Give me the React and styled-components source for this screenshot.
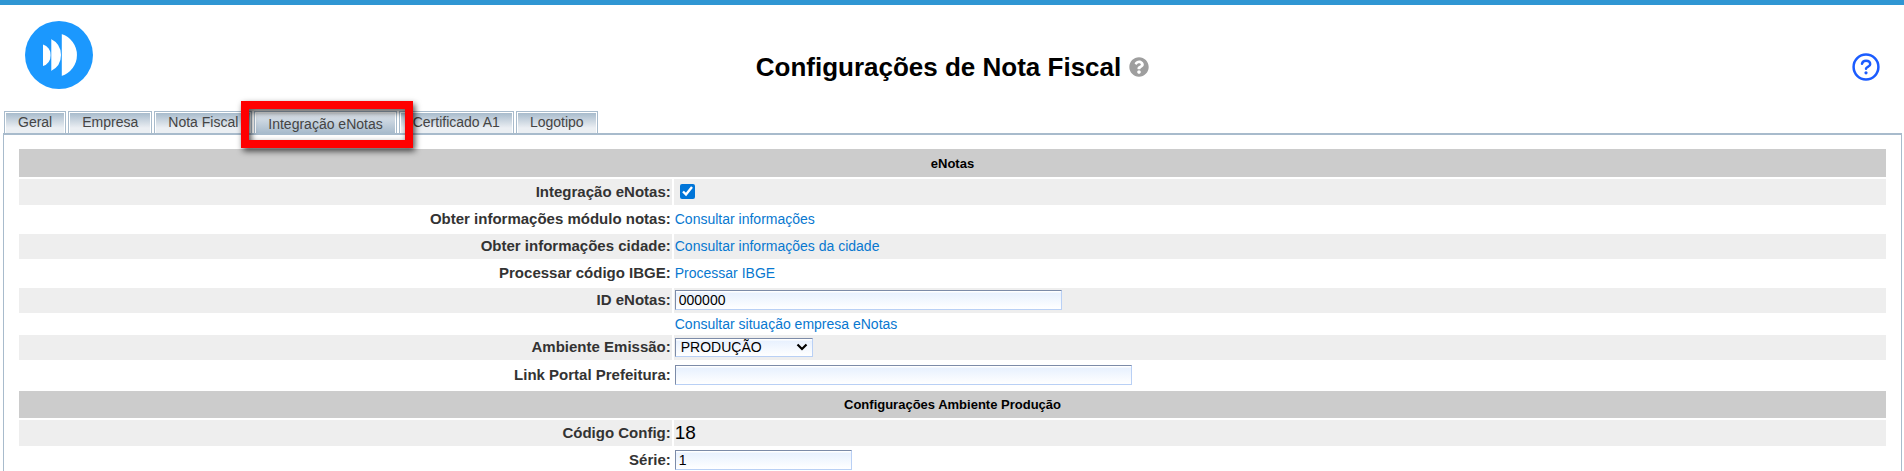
import styled, { createGlobalStyle } from "styled-components"

const tabs = [
  { title: "Geral" },
  { title: "Empresa" },
  { title: "Nota Fiscal" },
  { title: "Integração eNotas", active: true },
  { title: "Certificado A1" },
  { title: "Logotipo" },
]

const App = () => {
  return (
    <>
      <GlobalStyle />
      <Header>
        <Logo viewBox="0 0 68 68" role="img" aria-label="Logo">
          <circle cx="34" cy="34" r="34" fill="#1b98fe" />
          <path
            fill="#fff"
            d="M18 23.5A11.300 11.300 0 0 1 18 45ZM26 18A17.800 17.800 0 0 1 26 50ZM36.500 13A22 22 0 0 1 36.500 55Z"
          />
          <path
            fill="none"
            stroke="#1b98fe"
            strokeWidth="0.6"
            d="M26 18V50M36.500 13V55"
          />
        </Logo>
        <Title>
          <h1>Configurações de Nota Fiscal</h1>
          <TitleHelp type="button" aria-label="Ajuda">
            <svg viewBox="0 0 512 512" width="20" height="20">
              <path
                fill="#9e9e9e"
                d="M504 256c0 137-111 248-248 248S8 393 8 256 119 8 256 8s248 111 248 248zM262.700 90c-54.500 0-89.300 23-116.500 63.800-3.500 5.300-2.400 12.400 2.700 16.300l34.700 26.300c5.200 3.900 12.600 3 16.700-2.100 17.900-22.700 30.100-35.800 57.300-35.800 20.400 0 45.700 13.100 45.700 33 0 15-12.400 22.700-32.500 34C247.100 238.500 216 254.900 216 296v4c0 6.600 5.400 12 12 12h56c6.600 0 12-5.400 12-12v-1.300c0-28.500 83.200-29.600 83.200-106.700 0-58-60.200-102-116.500-102zM256 338c-25.400 0-46 20.600-46 46s20.600 46 46 46 46-20.600 46-46-20.600-46-46-46z"
              />
            </svg>
          </TitleHelp>
        </Title>
        <HelpLink href="#ajuda" aria-label="Central de ajuda">
          <svg
            viewBox="0 0 28 28"
            width="28"
            height="28"
            fill="none"
            stroke="#1b5cff"
            strokeWidth="2.5"
            strokeLinecap="round"
          >
            <circle cx="14" cy="14" r="12.400" />
            <path d="M10 10.800C10.400 8.800 12 7.800 14 7.800C16.400 7.800 18.200 9.200 18.200 11.300C18.200 14 14 13.800 14 15.800" />
            <circle cx="14" cy="19.800" r="1.600" fill="#1b5cff" stroke="none" />
          </svg>
        </HelpLink>
      </Header>

      <Tabs>
        {tabs.map((tab) => (
          <Tab key={tab.title} $active={tab.active}>
            <TabButton type="button" $active={tab.active}>
              {tab.title}
            </TabButton>
            {tab.active && <Highlight />}
          </Tab>
        ))}
      </Tabs>

      <Panel>
        <Table>
          <colgroup>
            <col width="35%" />
            <col />
          </colgroup>
          <tbody>
            <tr>
              <Section colSpan={2} $height={28}>
                eNotas
              </Section>
            </tr>
            <Row $shaded $height={26}>
              <th scope="row">
                <label htmlFor="integracao">Integração eNotas:</label>
              </th>
              <td>
                <Checkbox id="integracao" type="checkbox" defaultChecked />
              </td>
            </Row>
            <Row>
              <th scope="row">Obter informações módulo notas:</th>
              <td>
                <a href="#informacoes">Consultar informações</a>
              </td>
            </Row>
            <Row $shaded>
              <th scope="row">Obter informações cidade:</th>
              <td>
                <a href="#cidade">Consultar informações da cidade</a>
              </td>
            </Row>
            <Row>
              <th scope="row">Processar código IBGE:</th>
              <td>
                <a href="#ibge">Processar IBGE</a>
              </td>
            </Row>
            <Row $shaded>
              <th scope="row">
                <label htmlFor="id-enotas">ID eNotas:</label>
              </th>
              <td>
                <Input id="id-enotas" $width={387} defaultValue="000000" />
              </td>
            </Row>
            <Row $height={18}>
              <th />
              <td>
                <a href="#situacao">Consultar situação empresa eNotas</a>
              </td>
            </Row>
            <Row $shaded>
              <th scope="row">
                <label htmlFor="ambiente">Ambiente Emissão:</label>
              </th>
              <td>
                <SelectBox>
                  <select id="ambiente" defaultValue="producao">
                    <option value="producao">PRODUÇÃO</option>
                    <option value="homologacao">HOMOLOGAÇÃO</option>
                  </select>
                  <svg viewBox="0 0 12 8" width="12" height="8">
                    <path
                      d="M1.500 1.500L6 6L10.500 1.500"
                      fill="none"
                      stroke="#000"
                      strokeWidth="2.2"
                    />
                  </svg>
                </SelectBox>
              </td>
            </Row>
            <Row $height={27}>
              <th scope="row">
                <label htmlFor="link-portal">Link Portal Prefeitura:</label>
              </th>
              <td>
                <Input id="link-portal" $width={457} />
              </td>
            </Row>
            <tr>
              <Section colSpan={2} $height={27}>
                Configurações Ambiente Produção
              </Section>
            </tr>
            <Row $shaded $height={26}>
              <th scope="row">Código Config:</th>
              <td>
                <Code>18</Code>
              </td>
            </Row>
            <Row>
              <th scope="row">
                <label htmlFor="serie">Série:</label>
              </th>
              <td>
                <Input id="serie" $width={177} defaultValue="1" />
              </td>
            </Row>
          </tbody>
        </Table>
      </Panel>
    </>
  )
}

const GlobalStyle = createGlobalStyle`
  * {
    box-sizing: border-box;
  }
  html {
    overflow: hidden;
  }
  body {
    margin: 0;
    border-top: 5px solid #2f96d3;
    background: #fff;
    color: #000;
    font-family: Arial, "Liberation Sans", sans-serif;
    font-size: 14px;
  }
`

const Header = styled.header`
  display: grid;
  grid-template-columns: 1fr auto 1fr;
  align-items: center;
  padding: 16px 24px 22px 25px;
`

const Logo = styled.svg`
  width: 68px;
  height: 68px;
`

const Title = styled.div`
  display: flex;
  align-items: center;
  gap: 8px;
  padding-top: 24px;
  h1 {
    margin: 0;
    font-size: 26px;
    line-height: 30px;
  }
`

const TitleHelp = styled.button`
  display: flex;
  padding: 0;
  border: 0;
  background: none;
  cursor: pointer;
`

const HelpLink = styled.a`
  display: flex;
  justify-self: end;
  padding-top: 24px;
`

const Tabs = styled.nav`
  display: flex;
  gap: 2px;
  padding-left: 4px;
`

const Tab = styled.div`
  position: relative;
  height: 22px;
  padding: 1px 1px 0;
  border: 1px solid #a8bbcc;
  border-bottom: 0;
`

const TabButton = styled.button`
  display: block;
  height: 20px;
  padding: ${(props) => (props.$active ? "2px 12px 0" : "0 12px 2px")};
  border: 0;
  background: ${(props) =>
    props.$active
      ? "linear-gradient(#e0e6ed, #a8bbcc)"
      : "linear-gradient(#a8bbcc, #ebeff3 75%)"};
  color: #444;
  font: inherit;
  line-height: 16px;
  white-space: nowrap;
  cursor: pointer;
`

const Highlight = styled.span`
  position: absolute;
  top: -11px;
  right: -17px;
  bottom: -15px;
  left: -14px;
  z-index: 1;
  border: 8px solid #f00;
  filter: drop-shadow(2px 3px 3px rgba(0, 0, 0, 0.7));
  pointer-events: none;
`

const Panel = styled.main`
  margin: 0 2px 0 3px;
  padding: 12px 13px;
  border: 1px solid #a8bbcc;
  border-top-width: 2px;
`

const Table = styled.table`
  width: 100%;
  border-spacing: 2px;
`

const Section = styled.th`
  height: ${(props) => props.$height}px;
  padding: 0;
  background: #ccc;
  font-size: 13px;
`

const Row = styled.tr`
  height: ${(props) => props.$height || 25}px;
  th,
  td {
    padding: 0 1px 1px;
    background: ${(props) => (props.$shaded ? "#eee" : "#fff")};
    line-height: 16px;
  }
  th {
    color: #333;
    font-size: 15px;
    text-align: right;
  }
  a {
    display: block;
    color: #0878d0;
    text-decoration: none;
  }
`

const Checkbox = styled.input`
  display: block;
  width: 15px;
  height: 15px;
  margin: 0 5px;
  accent-color: #0075d8;
`

const Input = styled.input`
  display: block;
  width: ${(props) => props.$width}px;
  max-width: 100%;
  height: 20px;
  padding: 0 3px 1px;
  border: 1px solid;
  border-color: #7c8ba8 #b9d0f5 #b9d0f5 #7c8ba8;
  background: linear-gradient(#fff 1px, #e8f1fe 2px, #fff);
  font: inherit;
`

const SelectBox = styled.div`
  display: grid;
  width: 138px;
  align-items: center;
  select,
  svg {
    grid-area: 1 / 1;
  }
  select {
    appearance: none;
    width: 100%;
    height: 19px;
    padding: 0 5px;
    border: 1px solid;
    border-color: #7c8ba8 #b9d0f5 #b9d0f5 #7c8ba8;
    border-radius: 0;
    background: linear-gradient(#fff 1px, #e8f1fe 2px, #fff);
    color: #000;
    font: inherit;
  }
  svg {
    justify-self: end;
    margin-right: 5px;
    pointer-events: none;
  }
`

const Code = styled.span`
  display: block;
  font-size: 19px;
`

export default App
